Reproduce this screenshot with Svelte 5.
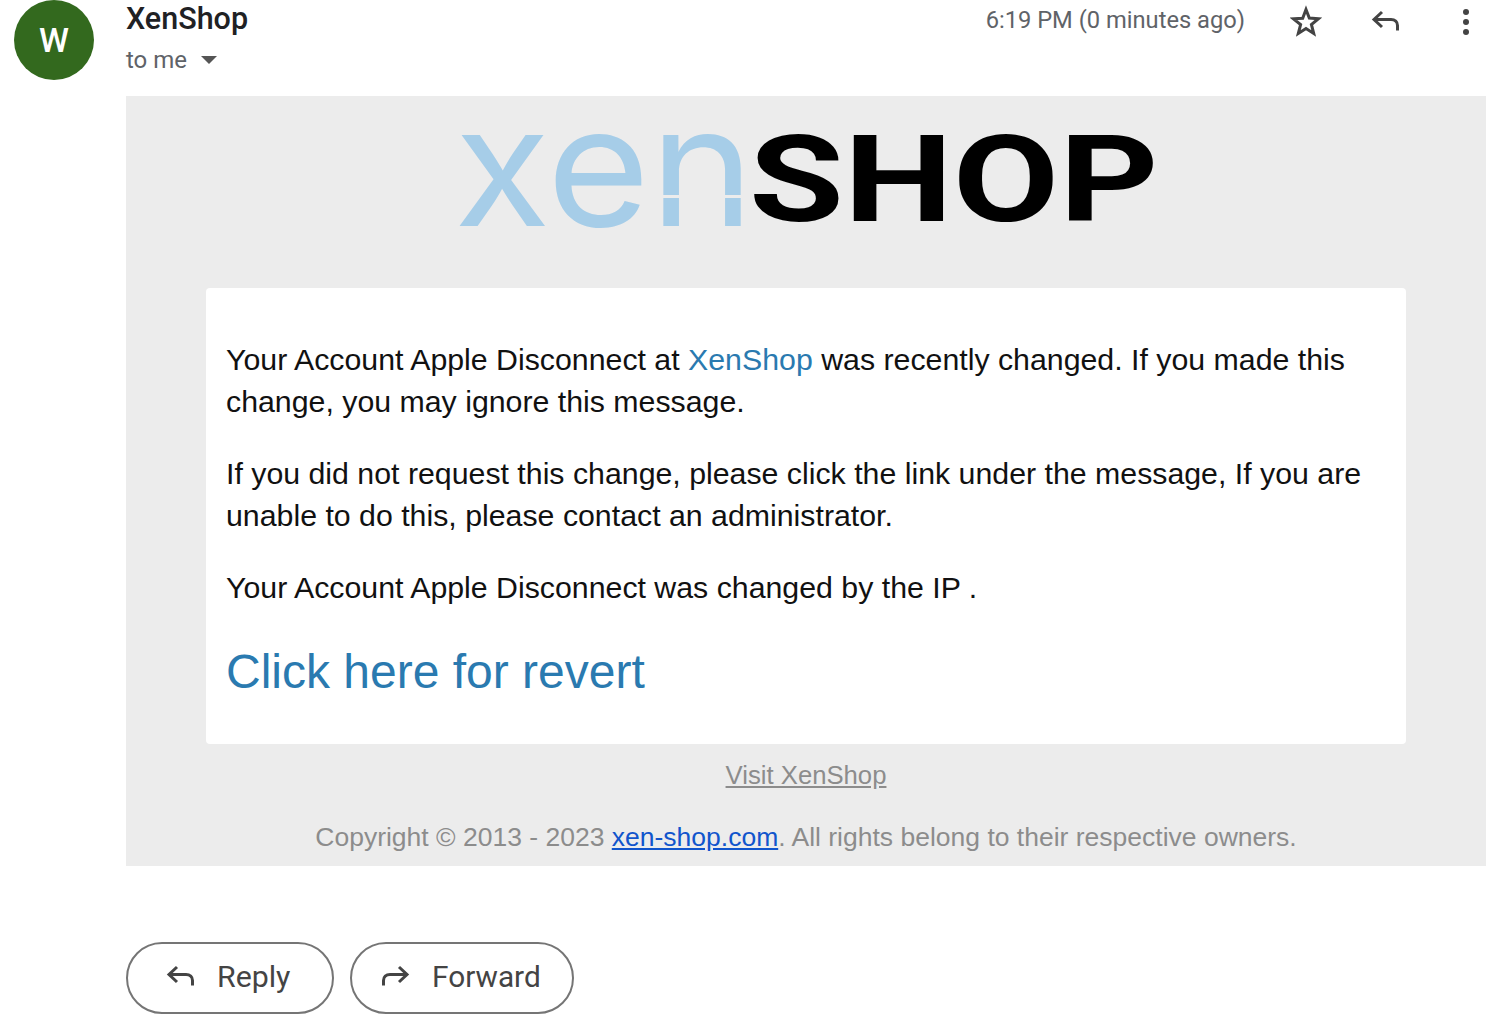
<script>
  const copyright = 'Copyright © 2013 - 2023 ';
</script>

<div class="page">
  <header class="head">
    <div class="avatar">W</div>
    <div class="sender">
      <div class="name">XenShop</div>
      <div class="to">to me <span class="caret"></span></div>
    </div>
    <div class="time">6:19 PM (0 minutes ago)</div>
    <div class="actions">
      <svg class="star" viewBox="0 0 32 32" width="32" height="32"><path d="M16 4.500l3.300 8.600 9.200.6-7.100 5.800 2.300 8.900L16 23.500l-7.700 5 2.300-8.900-7.100-5.800 9.200-.6z" fill="none" stroke="#444" stroke-width="3"/></svg>
      <svg class="reply-top" viewBox="0 0 30 24" width="30" height="24"><path d="M11 3L3 10.500l8 7.500M3 10.500h17c4 0 6.500 2.500 6.500 6v5" fill="none" stroke="#444" stroke-width="3"/></svg>
      <div class="dots"><i></i><i></i><i></i></div>
    </div>
  </header>

  <main class="mail">
    <div class="logo"><span class="xen">xen</span><span class="shop">SHOP</span></div>
    <section class="card">
      <p>Your Account Apple Disconnect at <a class="blue" href="#top">XenShop</a> was recently changed. If you made this change, you may ignore this message.</p>
      <p>If you did not request this change, please click the link under the message, If you are unable to do this, please contact an administrator.</p>
      <p>Your Account Apple Disconnect was changed by the IP .</p>
      <a class="blue big" href="#top">Click here for revert</a>
    </section>
    <a class="visit" href="#top">Visit XenShop</a>
    <div class="copy">{copyright}<a href="#top">xen-shop.com</a>. All rights belong to their respective owners.</div>
  </main>

  <div class="buttons">
    <button>
      <svg viewBox="0 0 30 24" width="30" height="24"><path d="M11 3L3 10.500l8 7.500M3 10.500h17c4 0 6.500 2.500 6.500 6v5" fill="none" stroke="#444" stroke-width="3"/></svg>
      Reply
    </button>
    <button class="fwd">
      <svg viewBox="0 0 30 24" width="30" height="24"><path d="M19 3l8 7.500-8 7.500M27 10.500H10c-4 0-6.500 2.500-6.500 6v5" fill="none" stroke="#444" stroke-width="3"/></svg>
      Forward
    </button>
  </div>
</div>

<style>
  :global(body) {
    background: #fff;
    font-family: Roboto, sans-serif;
  }
  .page {
    height: 1032px;
    overflow: hidden;
    padding-left: 14px;
    padding-right: 25px;
  }
  .head {
    display: flex;
    height: 96px;
    margin-right: 17px;
  }
  .avatar {
    width: 80px;
    height: 80px;
    border-radius: 50%;
    background: #33691e;
    color: #fff;
    font-size: 34px;
    font-weight: 500;
    line-height: 80px;
    text-align: center;
  }
  .sender {
    margin-left: 32px;
    flex: 1;
  }
  .name {
    color: #202124;
    font-size: 30.5px;
    font-weight: 500;
    line-height: 37px;
  }
  .to {
    display: flex;
    align-items: center;
    color: #5f6368;
    font-size: 24px;
    line-height: 30px;
    margin-top: 8px;
  }
  .caret {
    width: 0;
    height: 0;
    margin-left: 14px;
    border: 8px solid transparent;
    border-top-color: #555;
    border-bottom: 0;
  }
  .time {
    color: #5f6368;
    font-size: 23.7px;
    line-height: 40px;
  }
  .actions {
    display: flex;
    align-items: flex-start;
    margin-left: 45px;
    gap: 49px;
    padding-top: 5px;
    margin-right: -2px;
  }
  .reply-top {
    margin-top: 4px;
  }
  .dots {
    display: flex;
    flex-direction: column;
    gap: 4px;
    padding: 4px 2px 0 13px;
  }
  .dots i {
    width: 6px;
    height: 6px;
    border-radius: 50%;
    background: #444;
  }
  .mail {
    margin-left: 112px;
    height: 770px;
    background: #ececec;
    display: flex;
    flex-direction: column;
    align-items: center;
    font-family: "Liberation Sans", Arial, sans-serif;
  }
  .logo {
    position: relative;
    height: 192px;
    width: 693px;
    display: flex;
    align-items: flex-start;
    line-height: 1;
    white-space: nowrap;
    box-sizing: border-box;
  }
  /* slit through the n of the logo */
  .logo::after {
    content: "";
    position: absolute;
    left: 198px;
    top: 99px;
    width: 90px;
    height: 3px;
    background: #ececec;
  }
  .xen {
    color: #a6cde8;
    font-family: Inter, sans-serif;
    font-weight: 400;
    font-size: 167px;
    width: 293px;
    display: inline-block;
    transform-origin: left;
    transform: scaleX(1.06);
    margin-top: -14px;
    margin-left: -6px;
    flex: none;
  }
  .shop {
    color: #000;
    font-family: Roboto, sans-serif;
    font-weight: 700;
    font-size: 120px;
    display: inline-block;
    width: 400px;
    transform: scaleX(1.285);
    transform-origin: left;
    margin-top: 24px;
    margin-left: 2px;
    flex: none;
  }
  .card {
    align-self: stretch;
    margin: 0 80px;
    height: 456px;
    box-sizing: border-box;
    background: #fff;
    border-radius: 4px;
    padding: 51px 20px 0;
    color: #111;
    font-size: 30.3px;
    line-height: 42px;
  }
  .card p {
    margin: 0 0 30px;
  }
  .blue {
    color: #2a7ab0;
    text-decoration: none;
  }
  .big {
    font-size: 48px;
    line-height: 66px;
    display: block;
  }
  .visit {
    margin-top: 15px;
    color: #8c8c8c;
    font-size: 25.7px;
    line-height: 32px;
    text-decoration: underline;
  }
  .copy {
    margin-top: 30px;
    color: #8c8c8c;
    font-size: 26.5px;
    line-height: 32px;
  }
  .copy a {
    color: #1155cc;
    text-decoration: underline;
  }
  .buttons {
    display: flex;
    gap: 16px;
    margin: 76px 0 0 112px;
  }
  button {
    display: flex;
    align-items: center;
    gap: 21px;
    height: 72px;
    width: 208px;
    box-sizing: border-box;
    padding: 0 0 4px 38px;
    background: #fff;
    border: 2px solid #757575;
    border-radius: 36px;
    color: #444;
    font-family: Roboto, sans-serif;
    font-size: 30.3px;
    font-weight: 400;
  }
  button.fwd {
    width: 224px;
    gap: 22px;
    padding-left: 28px;
    font-size: 29.8px;
  }
</style>
